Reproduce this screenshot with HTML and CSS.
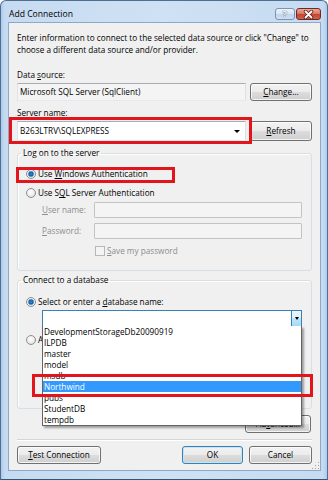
FILE: index.html
```html
<!DOCTYPE html>
<html lang="en">
<head>
  <meta charset="UTF-8">
  <title>Add Connection</title>
  <link rel="stylesheet" href="styles.css">
</head>
<body>
  <div class="window">
    <header class="titlebar">
      <span class="title">Add Connection</span>
      <div class="caption-buttons">
        <span class="caption-btn help">?</span>
        <span class="caption-btn close">
          <svg width="11" height="9" viewBox="0 0 11 9">
            <path d="M2.5 1.5 L8.5 7.5 M8.5 1.5 L2.5 7.5" stroke="#5a231b" stroke-width="3.4" stroke-linecap="round"/>
            <path d="M2.5 1.5 L8.5 7.5 M8.5 1.5 L2.5 7.5" stroke="#fff" stroke-width="1.8" stroke-linecap="round"/>
          </svg>
        </span>
      </div>
    </header>

    <main class="client">
      <p class="intro">Enter information to connect to the selected data source or click "Change" to<br>choose a different data source and/or provider.</p>

      <div class="field-label first">Data <u>s</u>ource:</div>
      <div class="field-row short">
        <div class="textbox readonly">Microsoft SQL Server (SqlClient)</div>
        <button class="btn side"><u>C</u>hange...</button>
      </div>

      <div class="field-label">S<u>e</u>rver name:</div>
      <div class="field-row">
        <div class="combo server">
          <span>B263LTRV\SQLEXPRESS</span>
          <span class="arrow"></span>
          <span class="callout callout-server"></span>
        </div>
        <button class="btn side"><u>R</u>efresh</button>
      </div>

      <fieldset class="group logon">
        <legend>Log on to the server</legend>
        <div class="option">
          <span class="radio checked"></span>
          <span>Use <u>W</u>indows Authentication</span>
          <span class="callout callout-auth"></span>
        </div>
        <div class="option second">
          <span class="radio"></span>
          <span>Use S<u>Q</u>L Server Authentication</span>
        </div>
        <div class="cred-row">
          <span class="cred-label"><u>U</u>ser name:</span>
          <div class="textbox disabled"></div>
        </div>
        <div class="cred-row pass">
          <span class="cred-label"><u>P</u>assword:</span>
          <div class="textbox disabled"></div>
        </div>
        <div class="check-row">
          <span class="checkbox"></span>
          <span><u>S</u>ave my password</span>
        </div>
      </fieldset>

      <fieldset class="group database">
        <legend>Connect to a database</legend>
        <div class="option">
          <span class="radio checked"></span>
          <span>Select or enter a <u>d</u>atabase name:</span>
        </div>
        <div class="combo db">
          <span class="db-text"></span>
          <span class="drop-btn"><span class="arrow"></span></span>
          <ul class="dropdown">
            <li>DevelopmentStorageDb20090919</li>
            <li>ILPDB</li>
            <li>master</li>
            <li>model</li>
            <li>msdb</li>
            <li class="selected">Northwind<span class="callout callout-db"></span></li>
            <li>pubs</li>
            <li>StudentDB</li>
            <li>tempdb</li>
          </ul>
        </div>
        <div class="option attach">
          <span class="radio"></span>
          <span>Attach a database file:</span>
        </div>
        <div class="attach-row">
          <div class="textbox"></div>
          <button class="btn browse">Browse...</button>
        </div>
        <div class="sub-label">Logical name:</div>
        <div class="textbox logical"></div>
      </fieldset>

      <div class="advanced-row">
        <button class="btn advanced">Ad<u>v</u>anced...</button>
      </div>

      <div class="separator"></div>

      <footer class="footer">
        <button class="btn test"><u>T</u>est Connection</button>
        <div class="footer-right">
          <button class="btn default ok">OK</button>
          <button class="btn cancel">Cancel</button>
        </div>
      </footer>

      <span class="grip"></span>
    </main>
  </div>
</body>
</html>
```

FILE: styles.css
```css
* {
  margin: 0;
  padding: 0;
  box-sizing: border-box;
}

body {
  font-family: "Open Sans", "Noto Sans", sans-serif;
  font-size: 8.2px;
  line-height: 12px;
  color: #000;
  background: #fff;
}

u {
  text-decoration-thickness: 1px;
  text-underline-offset: 1px;
}

/* window frame */
.window {
  width: 328px;
  height: 480px;
  display: flex;
  flex-direction: column;
  padding: 0 6px 8px 7px;
  border: 1px solid #4f6f92;
  border-bottom-color: #2f5873;
  border-radius: 6px 6px 0 0;
  background: linear-gradient(90deg, #aecbeb 0, #c6dbf1 4px, #cfe1f4 50%, #c6dbf1 calc(100% - 4px), #aecbeb 100%);
}

.titlebar {
  height: 21px;
  display: flex;
  align-items: flex-start;
  flex: none;
}

.title {
  margin: 7px 0 0 1px;
  font-size: 8.6px;
  color: #000;
}

.caption-buttons {
  margin: 7px 0 0 auto;
  display: flex;
  gap: 1px;
}

.caption-btn {
  height: 12px;
  border-radius: 3px;
  display: flex;
  align-items: center;
  justify-content: center;
}

.caption-btn.help {
  width: 20px;
  border: 1px solid #7b94b3;
  background: linear-gradient(#edf3fa 0, #d9e5f3 50%, #c2d4ea 50%, #cfe0f2 100%);
  color: #fff;
  font-weight: 700;
  font-size: 9px;
  text-shadow: 0 0 1px #4a5e78, 0 0 1px #4a5e78;
}

.caption-btn.close {
  width: 25px;
  border: 1px solid #6e2a22;
  background: linear-gradient(#e9a99b 0, #d8735f 50%, #c5422c 50%, #d0604a 100%);
}

/* client area */
.client {
  position: relative;
  flex: 1;
  background: #f0f0f0;
  border: 1px solid #8da9c8;
  padding: 9px 8px 6px 8px;
}

.intro {
  line-height: 12px;
}

.field-label {
  margin-top: 6px;
  height: 12px;
}

.field-label.first {
  margin-top: 13px;
}

.field-row {
  display: flex;
  gap: 4px;
  margin-top: 2px;
  height: 20px;
}

.field-row.short {
  height: 18px;
}

.textbox {
  flex: 1;
  height: 100%;
  background: #fff;
  border: 1px solid #abadb3;
  border-color: #abadb3 #dbdfe6 #e3e9ef #e2e3ea;
  padding-left: 2px;
  display: flex;
  align-items: center;
}

.textbox.readonly {
  background: #f4f4f4;
}

.textbox.disabled {
  background: #f4f4f4;
  border: 1px solid #c3c3c3;
  border-radius: 1px;
}

.combo {
  position: relative;
  flex: 1;
  display: flex;
  align-items: center;
  background: #fff;
  border: 1px solid #abadb3;
  border-color: #abadb3 #dbdfe6 #e3e9ef #e2e3ea;
  padding-left: 2px;
}

.combo.server .arrow {
  margin: 0 5px 0 auto;
}

.arrow {
  width: 0;
  height: 0;
  border-left: 3px solid transparent;
  border-right: 3px solid transparent;
  border-top: 3px solid #000;
}

/* buttons */
.btn {
  font: inherit;
  color: #000;
  height: 18px;
  border: 1px solid #707070;
  border-radius: 3px;
  background: linear-gradient(#f2f2f2 0, #ebebeb 50%, #dddddd 50%, #cfcfcf 100%);
  box-shadow: inset 0 0 0 1px rgba(255, 255, 255, 0.75);
}

.btn.side {
  width: 62px;
  flex: none;
}

.field-row .btn {
  height: 100%;
}

.btn.default {
  border-color: #3c7fb1;
  box-shadow: inset 0 0 0 1px #c4e4f7;
}

/* group boxes */
.group {
  margin-top: 6px;
  border: 1px solid #d5dfe5;
  border-radius: 3px;
  padding: 9px 9px 13px 8px;
  box-shadow: inset 1px 1px 0 #fff;
}

.group legend {
  margin-left: -5px;
  padding: 0 2px;
  height: 12px;
  line-height: 12px;
}

.group.database {
  margin-top: 3px;
  padding-top: 10px;
  padding-bottom: 7px;
}

.option {
  position: relative;
  display: flex;
  align-items: center;
  height: 12px;
}

.option.second {
  margin-top: 7px;
}

.radio {
  width: 10px;
  height: 10px;
  flex: none;
  margin-right: 2px;
  border-radius: 50%;
  border: 1px solid #8e8f8f;
  background: radial-gradient(circle at 45% 40%, #ffffff 0, #ececec 55%, #cdcdcd 100%);
}

.radio.checked {
  background: radial-gradient(circle at 50% 50%, #3c8fd6 0, #175a98 2px, #8fc3ec 3px, #f2f2f2 3.6px, #dedede 100%);
}

.cred-row {
  display: flex;
  align-items: center;
  height: 16px;
  margin: 3px 0 0 16px;
  color: #8d8d8d;
}

.cred-row.pass {
  margin-top: 5px;
}

.cred-label {
  width: 52px;
  flex: none;
}

.check-row {
  display: flex;
  align-items: center;
  height: 12px;
  margin: 6px 0 0 69px;
  color: #8d8d8d;
}

.checkbox {
  width: 10px;
  height: 10px;
  margin-right: 2px;
  border: 1px solid #b7b7b7;
  background: #f4f4f4;
}

/* database combo with open list */
.combo.db {
  margin: 2px 0 0 16px;
  height: 17px;
  border: 1px solid #3c7fb1;
  padding-left: 0;
}

.db-text {
  flex: 1;
}

.drop-btn {
  width: 10px;
  height: 100%;
  display: flex;
  align-items: center;
  justify-content: center;
  border-left: 1px solid #3c7fb1;
  background: linear-gradient(#eaf6fd 0, #d9f0fc 50%, #bee6fd 50%, #a7d9f5 100%);
}

.drop-btn .arrow {
  border-left-width: 2.5px;
  border-right-width: 2.5px;
}

.dropdown {
  position: absolute;
  top: 100%;
  left: -1px;
  right: -1px;
  z-index: 5;
  list-style: none;
  background: #fff;
  border: 1px solid #646464;
  border-top: none;
  box-shadow: 2px 2px 2px rgba(0, 0, 0, 0.35);
}

.dropdown li {
  position: relative;
  height: 11px;
  line-height: 11px;
  padding-left: 1px;
  font-size: 8.2px;
}

.dropdown li.selected {
  background: #3399ff;
  color: #fff;
}

.option.attach {
  margin-top: 7px;
}

.attach-row {
  display: flex;
  gap: 4px;
  height: 17px;
  margin: 3px 0 0 16px;
}

.btn.browse {
  width: 62px;
  height: 17px;
}

.sub-label {
  margin: 4px 0 0 16px;
  height: 12px;
}

.textbox.logical {
  margin: 2px 0 0 16px;
  height: 17px;
}

/* red annotation frames */
.callout {
  position: absolute;
  border: 3px solid #e2151c;
  pointer-events: none;
  z-index: 6;
}

.callout-server {
  top: -5px;
  bottom: -4px;
  left: -9px;
  right: -7px;
}

.callout-auth {
  top: -1px;
  left: -10px;
  width: 159px;
  height: 16px;
}

.callout-db {
  top: -7px;
  left: -11px;
  right: -12px;
  bottom: -5px;
}

/* bottom buttons */
.advanced-row {
  display: flex;
  justify-content: flex-end;
  margin-top: 6px;
}

.btn.advanced {
  width: 66px;
  margin-right: 1px;
}

.separator {
  margin-top: 6px;
  border-top: 1px solid #d5d5d5;
  border-bottom: 1px solid #fff;
}

.footer {
  display: flex;
  justify-content: space-between;
  margin-top: 5px;
}

.footer-right {
  display: flex;
  gap: 6px;
}

.btn.test {
  width: 84px;
}

.btn.ok {
  width: 61px;
}

.btn.cancel {
  width: 63px;
}

.grip {
  position: absolute;
  right: 1px;
  bottom: 1px;
  width: 8px;
  height: 8px;
  background:
    radial-gradient(circle, #a0a0a0 0.6px, transparent 1px) 0 0 / 3px 3px;
  clip-path: polygon(100% 0, 100% 100%, 0 100%);
}
```
